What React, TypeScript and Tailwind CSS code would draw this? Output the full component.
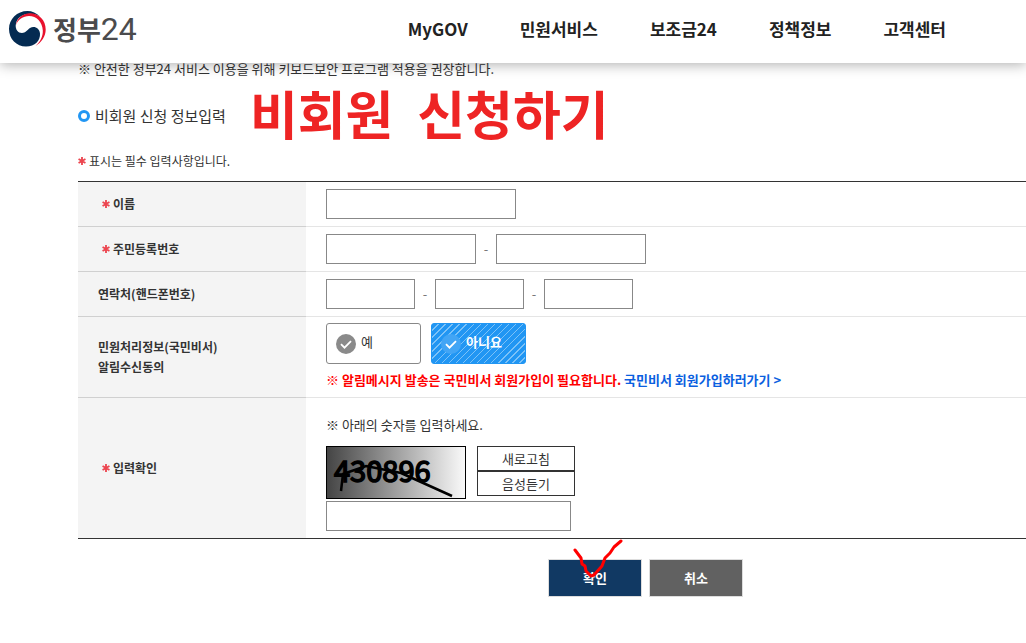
import { useState } from 'react';

const font = "font-['Noto_Sans_CJK_KR','Noto_Sans',sans-serif]";
const box = 'h-[30px] border border-[#888] bg-white px-2 text-[13px] outline-none focus:border-[#2196f3]';
const th = 'w-[228px] border-[#d0d0d0] bg-[#f4f4f4] px-5 text-left align-middle text-xs leading-5 font-bold text-[#333]';
const td = 'border-[#e5e5e5] pl-5 align-middle';

const menus = ['MyGOV', '민원서비스', '보조금24', '정책정보', '고객센터'];

function Required() {
  return (
    <svg viewBox="0 0 10 10" className="mr-[3px] inline-block size-2 align-[1px]" stroke="#ec4650" strokeWidth="2.3" aria-hidden="true">
      <path d="M5 0v10M.7 2.5l8.6 5M9.3 2.5l-8.6 5" />
    </svg>
  );
}

function Emblem() {
  return (
    <svg viewBox="0 0 38 38" className="size-[38px]" aria-hidden="true">
      <path d="M32 6.500C28.500 3 24 1 19.500 1C9 1 1 9 1 19C1 29 8.500 36.500 18 36.500C27 36.500 32.500 30.500 32 23.500C31.600 18.500 26.500 15.500 22 18C19 20 17.500 23 14 23C10 23 7.500 19.500 7.700 15.500C8 11.500 9.500 9 12 7C18 2.500 26 3 32 6.500Z" fill="#042b52" />
      <path d="M8 15C8.500 9 14.500 3.300 22 3.300C31 3.300 37.700 10.500 37.700 19.500C37.700 26.500 33.500 32.500 27.500 36C32.500 31.500 35 26.500 34.800 20.500C34.500 12 28.500 6 21 6C15 6 10 9.500 8 15Z" fill="#e8112d" />
    </svg>
  );
}

function Check({ fill }: { fill: string }) {
  return (
    <svg viewBox="0 0 20 20" className="mt-1 size-5" fill="none" aria-hidden="true">
      <circle cx="10" cy="10" r="10" fill={fill} />
      <path d="M5 10.200l3.500 3.500 6.500-6.500" stroke="#fff" strokeWidth="1.800" />
    </svg>
  );
}

function Captcha() {
  return (
    <svg viewBox="0 0 140 53" className="h-[53px] w-[140px]" role="img" aria-label="430896">
      <defs>
        <linearGradient id="shade" x1="0" y1="0" x2="1" y2="0">
          <stop offset="0" stopColor="#444" />
          <stop offset="1" stopColor="#fafafa" />
        </linearGradient>
      </defs>
      <rect x=".5" y=".5" width="139" height="52" fill="url(#shade)" stroke="#000" />
      <text x="8" y="36" fontSize="29" stroke="#000" strokeWidth="1.500">430896</text>
      <path d="M15 45l2-17 23-8 35 7 51 23" fill="none" stroke="#000" strokeWidth="2.500" />
    </svg>
  );
}

export default function App() {
  const [agree, setAgree] = useState('no');

  return (
    <div className={`min-h-screen overflow-x-hidden bg-white text-[#333] ${font}`}>
      <header className="relative z-10 flex h-[63px] items-center justify-between bg-white pr-20 pl-2 shadow-[0_2px_12px_rgba(0,0,0,0.3)]">
        <a href="#" className="flex items-center gap-[7px] pb-1.5 text-[#4b4b4d]">
          <Emblem />
          <span className="flex items-baseline leading-9">
            <span className="text-[26px] font-bold">정부</span>
            <span className="font-['Roboto',sans-serif] text-[32px] font-normal">24</span>
          </span>
        </a>
        <nav className="flex gap-[52px] pb-1.5">
          {menus.map((menu) => (
            <a key={menu} href="#" className="text-[17px] leading-6 font-bold whitespace-nowrap text-[#222]">{menu}</a>
          ))}
        </nav>
      </header>

      <main className="-mt-1 pl-[78px]">
        <p className="text-[13px] leading-5">※ 안전한 정부24 서비스 이용을 위해 키보드보안 프로그램 적용을 권장합니다.</p>

        <div className="flex h-[72px] items-center">
          <h2 className="flex items-center gap-[5px] pt-0.5 text-[15px] leading-6 whitespace-nowrap">
            <span className="size-3 rounded-full border-[3px] border-[#2196f3]" />
            비회원 신청 정보입력
          </h2>
          <strong className="ml-6 pb-1 text-[52px] leading-[64px] font-bold whitespace-nowrap text-[#ee2424]">
            비회원 <span className="ml-3">신청하기</span>
          </strong>
        </div>

        <p className="mb-[10px] text-xs leading-5"><Required />표시는 필수 입력사항입니다.</p>

        <form onSubmit={(e) => e.preventDefault()}>
          <table className="w-full border-separate border-spacing-0 border-t border-b border-[#333]">
            <tbody className="[&>tr:not(:last-child)>*]:border-b">
              <tr className="h-[45px]">
                <th scope="row" className={th}><label htmlFor="name" className="pl-1"><Required />이름</label></th>
                <td className={td}><input id="name" type="text" className={`block w-[190px] ${box}`} /></td>
              </tr>
              <tr className="h-[45px]">
                <th scope="row" className={th}><label htmlFor="rrn1" className="pl-1"><Required />주민등록번호</label></th>
                <td className={td}>
                  <div className="flex items-center">
                    <input id="rrn1" type="text" className={`w-[150px] ${box}`} />
                    <span className="w-5 text-center text-[13px] text-[#777]">-</span>
                    <input type="password" aria-label="주민등록번호 뒷자리" className={`w-[150px] ${box}`} />
                  </div>
                </td>
              </tr>
              <tr className="h-[45px]">
                <th scope="row" className={th}><label htmlFor="tel1">연락처(핸드폰번호)</label></th>
                <td className={td}>
                  <div className="flex items-center">
                    <input id="tel1" type="text" className={`w-[89px] ${box}`} />
                    <span className="w-5 text-center text-[13px] text-[#777]">-</span>
                    <input type="text" aria-label="연락처 가운데 자리" className={`w-[89px] ${box}`} />
                    <span className="w-5 text-center text-[13px] text-[#777]">-</span>
                    <input type="text" aria-label="연락처 끝자리" className={`w-[89px] ${box}`} />
                  </div>
                </td>
              </tr>
              <tr>
                <th scope="row" className={th}>민원처리정보(국민비서)<br />알림수신동의</th>
                <td className={`pt-[6px] pb-[7px] ${td}`}>
                  <div className="flex gap-[10px]">
                    <label className="relative flex h-[41px] w-[95px] items-center gap-[5px] rounded-[3px] border border-[#888] pb-1 pl-[9px] text-[13px]">
                      <input type="radio" name="agree" className="sr-only" checked={agree === 'yes'} onChange={() => setAgree('yes')} />
                      <Check fill="#8a8a8a" />
                      예
                    </label>
                    <label className="relative flex h-[41px] w-[95px] items-center gap-[5px] rounded-[3px] border border-[#2196f3] bg-[#2196f3] bg-[repeating-linear-gradient(135deg,#2196f3_0px,#2196f3_4px,#7cc2f8_4px,#7cc2f8_5px)] pb-1 pl-[9px] text-[13px] font-bold text-white">
                      <input type="radio" name="agree" className="sr-only" checked={agree === 'no'} onChange={() => setAgree('no')} />
                      <Check fill="#42a5f5" />
                      아니요
                    </label>
                  </div>
                  <p className="mt-[6px] text-[13px] leading-5 font-bold whitespace-nowrap text-[#f00]">
                    ※ 알림메시지 발송은 국민비서 회원가입이 필요합니다. <a href="#" className="text-[#0b5fe0]">국민비서 회원가입하러가기 &gt;</a>
                  </p>
                </td>
              </tr>
              <tr>
                <th scope="row" className={th}><label htmlFor="captcha" className="pl-1"><Required />입력확인</label></th>
                <td className={`pt-[17px] pb-[7px] ${td}`}>
                  <p className="text-[13px] leading-5">※ 아래의 숫자를 입력하세요.</p>
                  <div className="mt-[11px] mb-[2px] flex gap-[11px]">
                    <Captcha />
                    <div className="flex w-[98px] flex-col">
                      <button type="button" className="h-[25px] border border-[#333] text-[13px] leading-5">새로고침</button>
                      <button type="button" className="h-[25px] border border-[#333] text-[13px] leading-5">음성듣기</button>
                    </div>
                  </div>
                  <input id="captcha" type="text" className={`block w-[245px] ${box}`} />
                </td>
              </tr>
            </tbody>
          </table>

          <div className="flex justify-center gap-[7px] pt-5 pb-10 pl-[187px]">
            <button type="submit" className="relative h-[38px] w-[94px] border border-[#ddd] bg-[#113963] text-[13px] font-bold text-white">
              확인
              <svg viewBox="0 0 52 42" className="absolute -top-[22px] left-6 h-[42px] w-[52px]" fill="none" stroke="#f00" strokeWidth="3" strokeLinecap="round" strokeLinejoin="round" aria-hidden="true">
                <path d="M2 12l6 8 1 6 3 2 1 5 5 5 3-1 8-9 3-8 5-5 4-6 7-6" />
              </svg>
            </button>
            <button type="button" className="h-[38px] w-[94px] border border-[#ddd] bg-[#616161] text-[13px] font-bold text-white">취소</button>
          </div>
        </form>
      </main>
    </div>
  );
}
